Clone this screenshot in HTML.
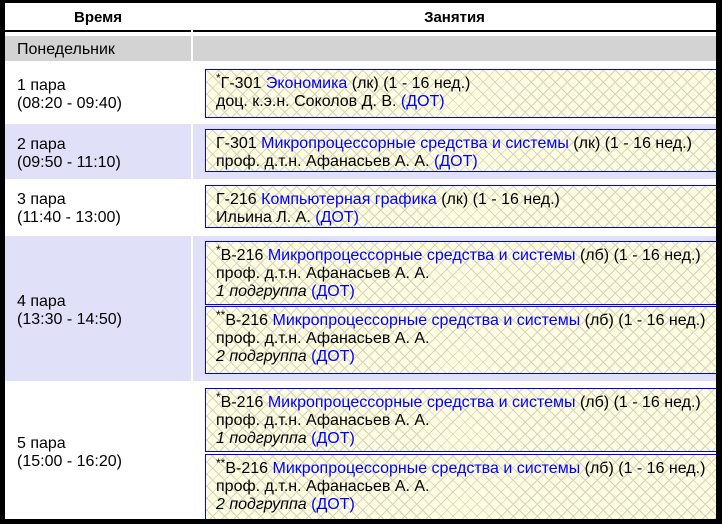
<!DOCTYPE html>
<html><head><meta charset="utf-8"><style>
body{margin:0;width:722px;height:524px;background:#000;position:relative;overflow:hidden;font-family:"Liberation Sans",Arial,sans-serif;font-size:16px;color:#000}
.a{position:absolute}
.w{left:5px;top:3px;width:711px;height:516px;background:#fff}
.h{font-weight:bold;text-align:center;border-bottom:2px solid #000;height:27px;line-height:30px;top:3px;font-size:15px}
.t{left:5px;width:186px;display:flex;align-items:center;padding:4px 0 0 12px;box-sizing:border-box;line-height:18px}
.c{left:193px;width:523px}
.lav{background:#e0e0f8}
.b{left:205px;width:520px;border:1px solid #00f;box-sizing:border-box;padding:5px 0 0 10px;line-height:18px;white-space:nowrap;
background-color:#fffde0;
background-image:repeating-linear-gradient(45deg,transparent 0 7.5px,#d4d4c4 7.5px 8.5px),repeating-linear-gradient(-45deg,transparent 0 7.5px,#d4d4c4 7.5px 8.5px)}
a{color:#00f;text-decoration:none}
sup{font-size:12px;vertical-align:6px;line-height:0}
</style></head><body>
<div class="a w"></div>
<div class="a h" style="left:5px;width:186px">Время</div>
<div class="a h" style="left:193px;width:523px">Занятия</div>
<div class="a" style="left:5px;top:36px;width:186px;height:25px;background:#d3d3d3;line-height:27px;padding-left:12px;box-sizing:border-box">Понедельник</div>
<div class="a" style="left:193px;top:36px;width:523px;height:25px;background:#d3d3d3"></div>

<div class="a t" style="top:63px;height:60px">1 пара<br>(08:20 - 09:40)</div>
<div class="a b" style="top:69px;height:49px"><sup>*</sup>Г-301 <a>Экономика</a> (лк) (1 - 16 нед.)<br>доц. к.э.н. Соколов Д. В. <a>(ДОТ)</a></div>

<div class="a t lav" style="top:124px;height:55px">2 пара<br>(09:50 - 11:10)</div>
<div class="a c lav" style="top:124px;height:55px"></div>
<div class="a b" style="top:129px;height:43px">Г-301 <a>Микропроцессорные средства и системы</a> (лк) (1 - 16 нед.)<br>проф. д.т.н. Афанасьев А. А. <a>(ДОТ)</a></div>

<div class="a t" style="top:180px;height:54px">3 пара<br>(11:40 - 13:00)</div>
<div class="a b" style="top:185px;height:43px">Г-216 <a>Компьютерная графика</a> (лк) (1 - 16 нед.)<br>Ильина Л. А. <a>(ДОТ)</a></div>

<div class="a t lav" style="top:236px;height:145px">4 пара<br>(13:30 - 14:50)</div>
<div class="a c lav" style="top:236px;height:145px"></div>
<div class="a b" style="top:241px;height:64px"><sup>*</sup>В-216 <a>Микропроцессорные средства и системы</a> (лб) (1 - 16 нед.)<br>проф. д.т.н. Афанасьев А. А.<br><i>1 подгруппа</i> <a>(ДОТ)</a></div>
<div class="a b" style="top:306px;height:68px"><sup>**</sup>В-216 <a>Микропроцессорные средства и системы</a> (лб) (1 - 16 нед.)<br>проф. д.т.н. Афанасьев А. А.<br><i>2 подгруппа</i> <a>(ДОТ)</a></div>

<div class="a t" style="top:383px;height:136px">5 пара<br>(15:00 - 16:20)</div>
<div class="a b" style="top:388px;height:64px"><sup>*</sup>В-216 <a>Микропроцессорные средства и системы</a> (лб) (1 - 16 нед.)<br>проф. д.т.н. Афанасьев А. А.<br><i>1 подгруппа</i> <a>(ДОТ)</a></div>
<div class="a b" style="top:454px;height:68px"><sup>**</sup>В-216 <a>Микропроцессорные средства и системы</a> (лб) (1 - 16 нед.)<br>проф. д.т.н. Афанасьев А. А.<br><i>2 подгруппа</i> <a>(ДОТ)</a></div>

<div class="a" style="left:716px;top:0;width:6px;height:524px;background:#000"></div>
<div class="a" style="left:0;top:519px;width:722px;height:5px;background:#000"></div>
</body></html>
